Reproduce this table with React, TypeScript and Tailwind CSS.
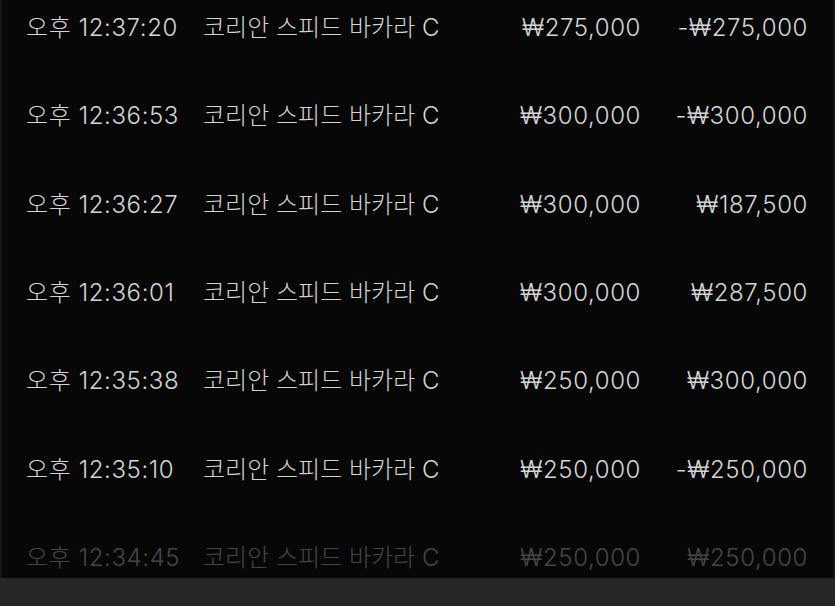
import React from "react";

type Row = { time: string; game: string; bet: string; result: string };

const rows: Row[] = [
  { time: "오후 12:37:20", game: "코리안 스피드 바카라 C", bet: "₩275,000", result: "-₩275,000" },
  { time: "오후 12:36:53", game: "코리안 스피드 바카라 C", bet: "₩300,000", result: "-₩300,000" },
  { time: "오후 12:36:27", game: "코리안 스피드 바카라 C", bet: "₩300,000", result: "₩187,500" },
  { time: "오후 12:36:01", game: "코리안 스피드 바카라 C", bet: "₩300,000", result: "₩287,500" },
  { time: "오후 12:35:38", game: "코리안 스피드 바카라 C", bet: "₩250,000", result: "₩300,000" },
  { time: "오후 12:35:10", game: "코리안 스피드 바카라 C", bet: "₩250,000", result: "-₩250,000" },
  { time: "오후 12:34:45", game: "코리안 스피드 바카라 C", bet: "₩250,000", result: "₩250,000" },
];

const App = () => {
  return (
    <div
      className="w-[835px] h-[606px] bg-[#262626] flex flex-col overflow-hidden"
      style={{ fontFamily: 'Inter, "Noto Sans CJK KR", sans-serif' }}
    >
      {/* 베팅 내역 리스트 */}
      <div className="relative h-[578px] overflow-hidden bg-[#070707] border-x-2 border-[#161616]">
        <div className="-mt-[16px] flex flex-col">
          {rows.map((r, i) => (
            <div
              key={i}
              className="h-[88.33px] grid grid-cols-[177px_1fr_auto_167px] items-center pl-[24px] pr-[25px] text-[24px] leading-none font-light text-[#d4d4d4]"
            >
              <span className="tracking-[0.6px]">{r.time}</span>
              <span>{r.game}</span>
              <span className="text-right tracking-[0.6px]">{r.bet}</span>
              <span className="text-right tracking-[0.6px]">{r.result}</span>
            </div>
          ))}
        </div>
        <div className="absolute left-0 right-0 bottom-0 h-[56px] bg-gradient-to-b from-[#070707]/0 to-[#070707]/70 to-[40%] pointer-events-none" />
      </div>
      <div className="flex-1 bg-[#262626]" />
    </div>
  );
};

export default App;
